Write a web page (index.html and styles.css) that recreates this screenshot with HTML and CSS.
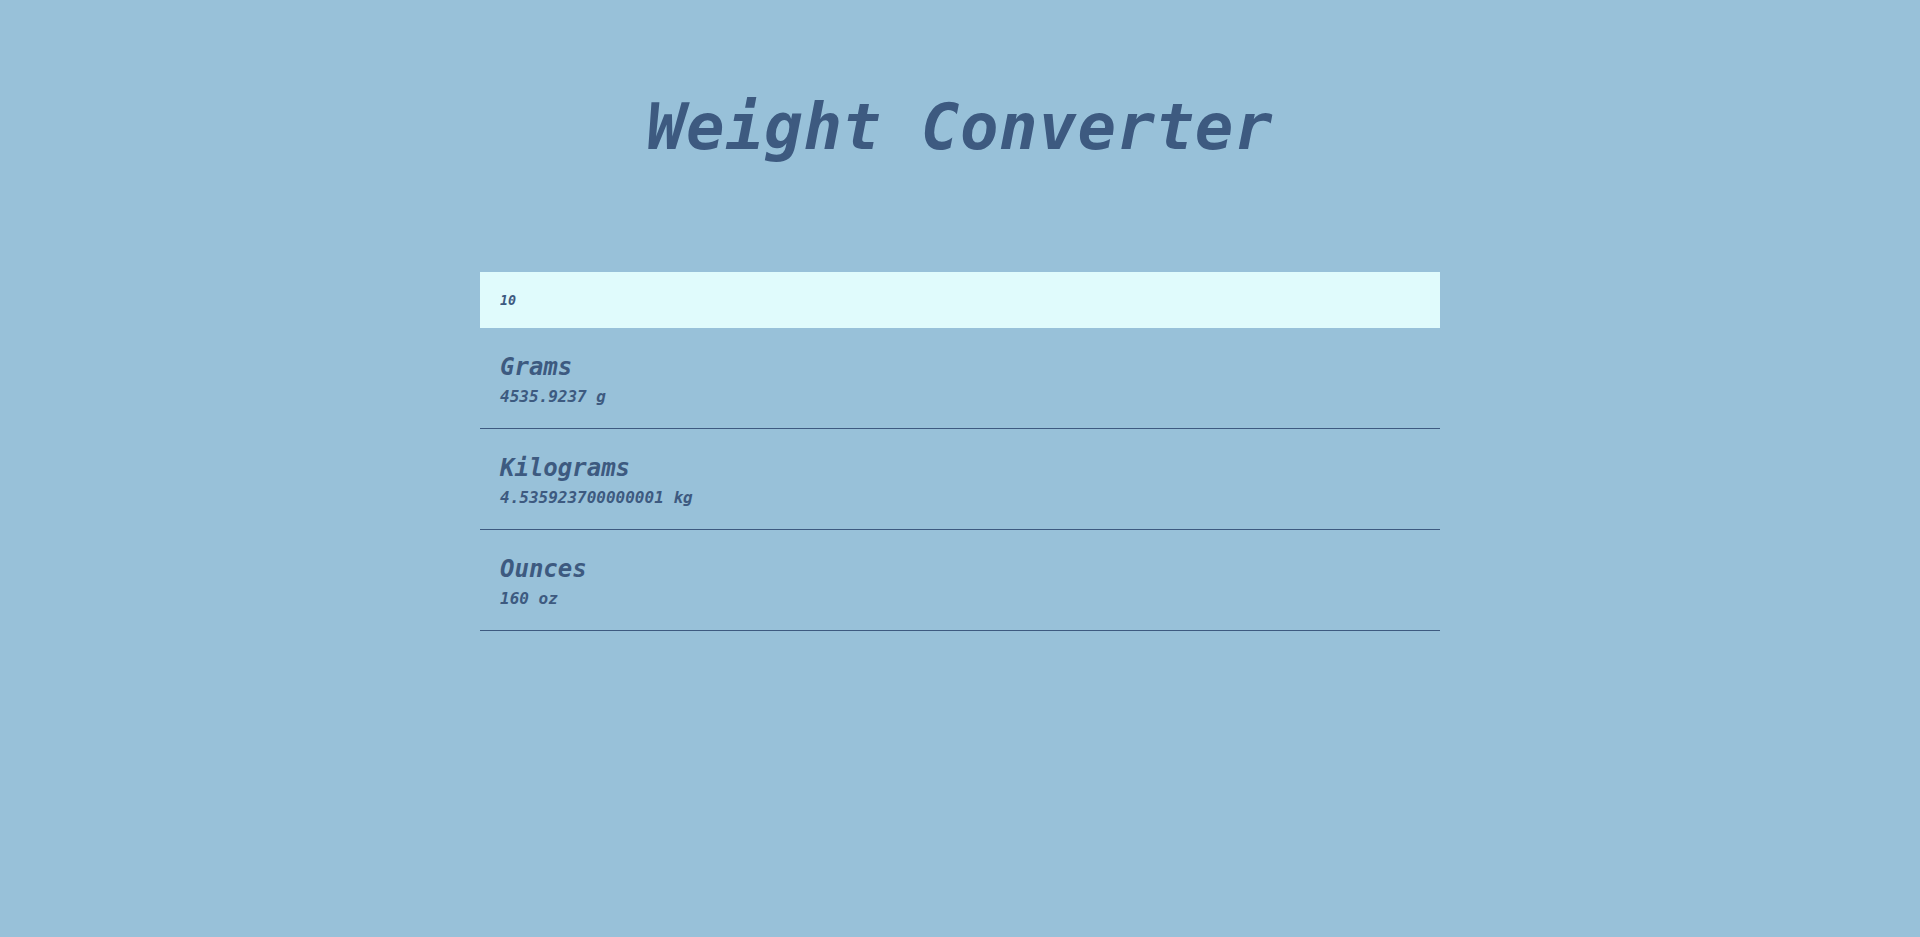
FILE: index.html
```html
<!DOCTYPE html>
<html lang="en">
<head>
<meta charset="utf-8">
<title>Weight Converter</title>
<link rel="stylesheet" href="styles.css">
</head>
<body>
  <main class="app">
    <h1 class="title">Weight Converter</h1>
    <section class="converter">
      <input class="amount" type="text" value="10">
      <div class="result">
        <h2 class="result-name">Grams</h2>
        <p class="result-value">4535.9237 g</p>
      </div>
      <div class="result">
        <h2 class="result-name">Kilograms</h2>
        <p class="result-value">4.535923700000001 kg</p>
      </div>
      <div class="result">
        <h2 class="result-name">Ounces</h2>
        <p class="result-value">160 oz</p>
      </div>
    </section>
  </main>
</body>
</html>
```
FILE: styles.css
```css
html, body {
  margin: 0;
  padding: 0;
}
body {
  background: #98c1d9;
  color: #3d5a80;
  font-family: "DejaVu Sans Mono", "Liberation Mono", monospace;
  font-style: italic;
  font-weight: bold;
  min-height: 937px;
}
.app {
  display: flex;
  flex-direction: column;
  align-items: center;
  padding-top: 95px;
}
.title {
  margin: 0;
  font-size: 64px;
  line-height: 64px;
  letter-spacing: 0.6px;
  font-weight: bold;
  font-style: italic;
}
.converter {
  width: 960px;
  margin-top: 113px;
  display: flex;
  flex-direction: column;
}
.amount {
  box-sizing: border-box;
  width: 100%;
  height: 56px;
  border: none;
  outline: none;
  background: #e0fbfc;
  color: #3d5a80;
  padding: 0 20px;
  font-family: inherit;
  font-style: italic;
  font-weight: bold;
  font-size: 13.33px;
}
.result {
  padding: 21px 20px 19px;
  border-bottom: 1px solid #3d5a80;
}
.result-name {
  margin: 0;
  font-size: 24px;
  line-height: 36px;
  font-weight: bold;
}
.result-value {
  margin: 0;
  font-size: 16px;
  line-height: 24px;
}
```
